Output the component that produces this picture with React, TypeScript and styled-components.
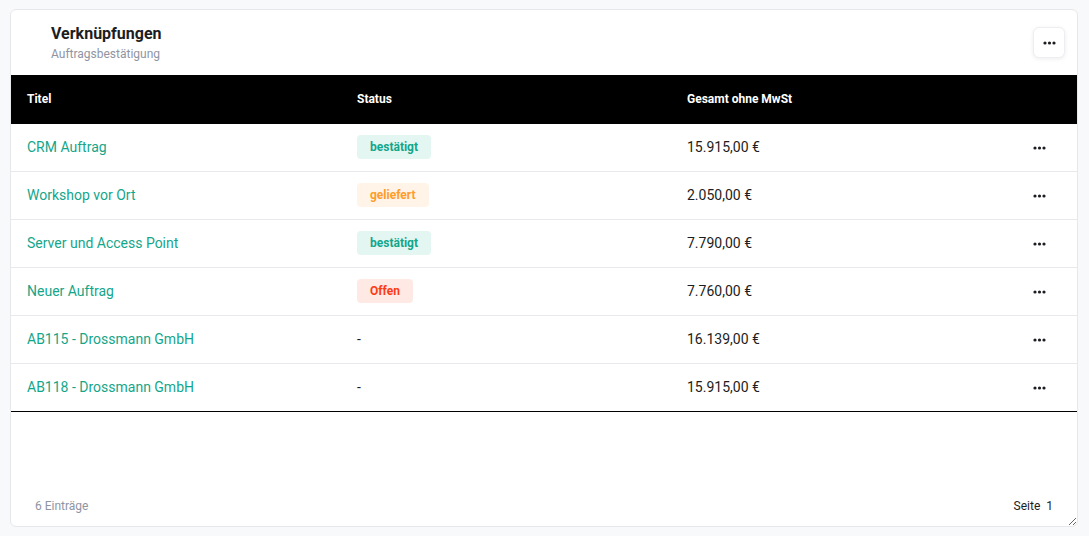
import React from 'react';
import styled, { createGlobalStyle } from 'styled-components';

const GlobalStyle = createGlobalStyle`
    html, body {
        margin: 0;
        padding: 0;
        background: #f8f9fb;
        font-family: Roboto, 'Liberation Sans', Arial, sans-serif;
    }
`;

const Page = styled.div`
    padding: 9px 11px 9px 10px;
`;

const Card = styled.div`
    background: #ffffff;
    border: 1px solid #e6e8ec;
    border-radius: 6px;
    height: 518px;
    box-sizing: border-box;
    display: flex;
    flex-direction: column;
    resize: both;
    overflow: hidden;
`;

const CardHeader = styled.div`
    display: flex;
    justify-content: space-between;
    align-items: flex-start;
    padding: 14px 12px 0 40px;
    height: 65px;
    box-sizing: border-box;
`;

const Titles = styled.div`
    display: flex;
    flex-direction: column;
`;

const Title = styled.div`
    font-size: 16px;
    font-weight: 700;
    color: #1c1d21;
    line-height: 20px;
`;

const Subtitle = styled.div`
    font-size: 12px;
    color: #8f94a3;
    line-height: 16px;
    margin-top: 2px;
`;

const MenuButton = styled.button`
    width: 32px;
    height: 31px;
    margin-top: 3px;
    border: 1px solid #eceef1;
    border-radius: 6px;
    background: #fff;
    box-shadow: 0 1px 4px rgba(20, 30, 50, 0.08);
    display: flex;
    align-items: center;
    justify-content: center;
    padding: 0;
    cursor: pointer;
`;

const Table = styled.table`
    width: 100%;
    border-collapse: collapse;
    table-layout: fixed;
`;

const HeadCell = styled.th<{ $w?: number }>`
    box-sizing: border-box;
    background: #000;
    color: #fff;
    font-size: 12px;
    font-weight: 700;
    text-align: left;
    height: 49px;
    padding: 0 16px 2px;
    width: ${(p) => (p.$w ? `${p.$w}px` : 'auto')};
`;

const Row = styled.tr<{ $last?: boolean }>`
    border-bottom: 1px solid ${(p) => (p.$last ? '#000' : '#e8e9ec')};
`;

const Cell = styled.td<{ $center?: boolean }>`
    height: 45px;
    padding: 0 16px 2px;
    font-size: 14px;
    color: #1c1d21;
    text-align: ${(p) => (p.$center ? 'center' : 'left')};
    svg {
        vertical-align: middle;
    }
`;

const TitleLink = styled.a`
    color: #14a68a;
    text-decoration: none;
    font-size: 14px;
`;

const tones = {
    ok: { bg: '#e4f6f2', fg: '#12a68a' },
    delivered: { bg: '#fff4e7', fg: '#ff9d2b' },
    open: { bg: '#ffe9e4', fg: '#fe3b15' },
};

const Badge = styled.span<{ $tone: keyof typeof tones }>`
    display: inline-block;
    font-size: 12px;
    font-weight: 700;
    line-height: 24px;
    padding: 0 13px;
    border-radius: 4px;
    background: ${(p) => tones[p.$tone].bg};
    color: ${(p) => tones[p.$tone].fg};
`;

const Spacer = styled.div`
    flex: 1;
`;

const Footer = styled.div`
    display: flex;
    justify-content: space-between;
    align-items: center;
    padding: 0 24px 13px 24px;
    font-size: 12px;
`;

const Count = styled.span`
    color: #8f94a3;
`;

const PageInfo = styled.span`
    color: #1c1d21;
    word-spacing: 3px;
`;

const Dots = () => (
    <svg width="13" height="4" viewBox="0 0 13 4">
        <circle cx="2" cy="2" r="1.6" fill="#1c1d21" />
        <circle cx="6.5" cy="2" r="1.6" fill="#1c1d21" />
        <circle cx="11" cy="2" r="1.6" fill="#1c1d21" />
    </svg>
);

type Entry = { title: string; status?: { label: string; tone: keyof typeof tones }; total: string };

const entries: Entry[] = [
    { title: 'CRM Auftrag', status: { label: 'bestätigt', tone: 'ok' }, total: '15.915,00 €' },
    { title: 'Workshop vor Ort', status: { label: 'geliefert', tone: 'delivered' }, total: '2.050,00 €' },
    { title: 'Server und Access Point', status: { label: 'bestätigt', tone: 'ok' }, total: '7.790,00 €' },
    { title: 'Neuer Auftrag', status: { label: 'Offen', tone: 'open' }, total: '7.760,00 €' },
    { title: 'AB115 - Drossmann GmbH', total: '16.139,00 €' },
    { title: 'AB118 - Drossmann GmbH', total: '15.915,00 €' },
];

const App = () => {
    return (
        <>
            <GlobalStyle />
            <Page>
                <Card>
                    <CardHeader>
                        <Titles>
                            <Title>Verknüpfungen</Title>
                            <Subtitle>Auftragsbestätigung</Subtitle>
                        </Titles>
                        <MenuButton>
                            <Dots />
                        </MenuButton>
                    </CardHeader>
                    <Table>
                        <thead>
                            <tr>
                                <HeadCell $w={330}>Titel</HeadCell>
                                <HeadCell $w={330}>Status</HeadCell>
                                <HeadCell $w={330}>Gesamt ohne MwSt</HeadCell>
                                <HeadCell />
                            </tr>
                        </thead>
                        <tbody>
                            {entries.map((e, i) => (
                                <Row key={e.title} $last={i === entries.length - 1}>
                                    <Cell>
                                        <TitleLink href="#">{e.title}</TitleLink>
                                    </Cell>
                                    <Cell>
                                        {e.status ? <Badge $tone={e.status.tone}>{e.status.label}</Badge> : '-'}
                                    </Cell>
                                    <Cell>{e.total}</Cell>
                                    <Cell $center>
                                        <Dots />
                                    </Cell>
                                </Row>
                            ))}
                        </tbody>
                    </Table>
                    <Spacer />
                    <Footer>
                        <Count>6 Einträge</Count>
                        <PageInfo>Seite 1</PageInfo>
                    </Footer>
                </Card>
            </Page>
        </>
    );
};

export default App;
